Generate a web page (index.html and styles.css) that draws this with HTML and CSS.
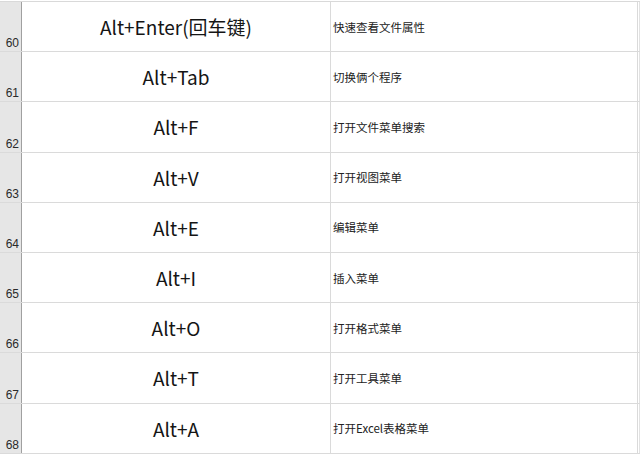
FILE: index.html
```html
<!DOCTYPE html>
<html lang="zh">
<head>
<meta charset="utf-8">
<link rel="stylesheet" href="styles.css">
</head>
<body>
<div class="sheet">
  <div class="row"><div class="rh">60</div><div class="key">Alt+Enter(回车键)</div><div class="desc">快速查看文件属性</div><div class="rest"></div></div>
  <div class="row"><div class="rh">61</div><div class="key">Alt+Tab</div><div class="desc">切换俩个程序</div><div class="rest"></div></div>
  <div class="row"><div class="rh">62</div><div class="key">Alt+F</div><div class="desc">打开文件菜单搜索</div><div class="rest"></div></div>
  <div class="row"><div class="rh">63</div><div class="key">Alt+V</div><div class="desc">打开视图菜单</div><div class="rest"></div></div>
  <div class="row"><div class="rh">64</div><div class="key">Alt+E</div><div class="desc">编辑菜单</div><div class="rest"></div></div>
  <div class="row"><div class="rh">65</div><div class="key">Alt+I</div><div class="desc">插入菜单</div><div class="rest"></div></div>
  <div class="row"><div class="rh">66</div><div class="key">Alt+O</div><div class="desc">打开格式菜单</div><div class="rest"></div></div>
  <div class="row"><div class="rh">67</div><div class="key">Alt+T</div><div class="desc">打开工具菜单</div><div class="rest"></div></div>
  <div class="row"><div class="rh">68</div><div class="key">Alt+A</div><div class="desc">打开Excel表格菜单</div><div class="rest"></div></div>
</div>
</body>
</html>
```
FILE: styles.css
```css
html, body {
  margin: 0;
  padding: 0;
  background: #ffffff;
  overflow: hidden;
}
.sheet {
  margin-top: 1px;
  border-top: 1px solid #d9d9d9;
  width: 640px;
}
.row {
  display: grid;
  grid-template-columns: 22px 309px 307px 2px;
  border-bottom: 1px solid #dadada;
  box-sizing: border-box;
  height: 50.2px;
}
.rh {
  background: #e6e6e6;
  border-right: 1px solid #a0a0a0;
  font-family: "Liberation Sans", Arial, sans-serif;
  font-size: 12px;
  color: #2a2a2a;
  display: flex;
  align-items: flex-end;
  justify-content: flex-end;
  padding-right: 2px;
  padding-bottom: 1px;
}
.key {
  display: flex;
  align-items: center;
  justify-content: center;
  font-family: "Noto Sans CJK SC", "Noto Sans", sans-serif;
  font-size: 19px;
  color: #151515;
  border-right: 1px solid #dadada;
}
.desc {
  display: flex;
  align-items: center;
  padding-left: 2px;
  font-family: "Noto Sans CJK SC", "Noto Sans", sans-serif;
  font-size: 11.5px;
  color: #222222;
  border-right: 1px solid #dadada;
}
.rest {
  border-right: 1px solid #e2e2e2;
}
```
